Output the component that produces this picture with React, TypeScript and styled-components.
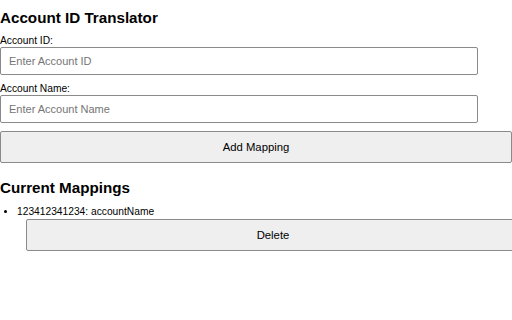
import * as React from "react";
import styled, {createGlobalStyle} from "styled-components";

const GlobalStyle = createGlobalStyle`
  html, body {
    margin: 0;
    padding: 0;
    background: #ffffff;
    overflow: hidden;
  }
  body {
    font-family: "Liberation Sans", Arial, sans-serif;
    color: #000000;
  }
`;

const Page = styled.div`
  width: 512px;
  height: 320px;
  display: flex;
  flex-direction: column;
`;

const Title = styled.h2<{$top: number}>`
  margin: ${p => p.$top}px 0 0 0;
  font-size: 15.2px;
  line-height: 18px;
  font-weight: bold;
`;

const Label = styled.label`
  display: block;
  margin-top: 8px;
  font-size: 10.24px;
  line-height: 12px;
`;

const Input = styled.input`
  display: block;
  box-sizing: border-box;
  width: 478px;
  height: 28px;
  margin: 0;
  padding: 0 8px;
  border: 1px solid #8a8a8a;
  border-radius: 2px;
  font-family: "Liberation Sans", Arial, sans-serif;
  font-size: 11px;
  color: #000;
  background: #fff;

  &::placeholder {
    color: #757575;
  }
`;

const Button = styled.button<{$width: string}>`
  display: block;
  box-sizing: border-box;
  width: ${p => p.$width};
  height: 32px;
  margin: 0;
  padding: 0;
  background: #efefef;
  border: 1px solid #8a8a8a;
  border-radius: 2px;
  font-family: "Liberation Sans", Arial, sans-serif;
  font-size: 11.3px;
  color: #000;
  flex-shrink: 0;
`;

const AddButton = styled(Button)`
  margin-top: 8px;
`;

const MappingList = styled.ul`
  margin: 9px 0 0 0;
  padding: 0 0 0 17px;
  font-size: 10.24px;
  line-height: 12px;
`;

const MappingItem = styled.li`
  list-style: disc;
`;

const DeleteButton = styled(Button)`
  margin: 1px 0 0 9px;
`;

interface IMapping {
    id: string;
    name: string;
}

const mappings: IMapping[] = [
    {id: "123412341234", name: "accountName"},
];

export default function App() {
    return (
        <Page>
            <GlobalStyle/>
            <Title $top={9}>Account ID Translator</Title>
            <Label>Account ID:</Label>
            <Input placeholder="Enter Account ID"/>
            <Label>Account Name:</Label>
            <Input placeholder="Enter Account Name"/>
            <AddButton $width="512px">Add Mapping</AddButton>
            <Title $top={16}>Current Mappings</Title>
            <MappingList>
                {mappings.map(m => (
                    <MappingItem key={m.id}>
                        {m.id}: {m.name}
                        <DeleteButton $width="494px">Delete</DeleteButton>
                    </MappingItem>
                ))}
            </MappingList>
        </Page>
    );
}
